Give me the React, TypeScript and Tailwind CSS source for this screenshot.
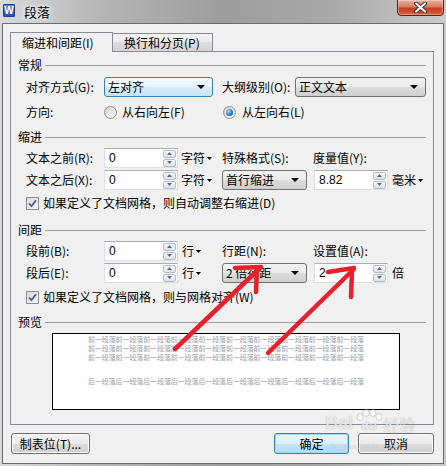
import React from "react";

function Tri({ big }: { big?: boolean }) {
  return big ? (
    <svg width="8" height="4" viewBox="0 0 8 4" className="shrink-0">
      <path d="M0 0h8L4 4z" fill="#000" />
    </svg>
  ) : (
    <svg width="5" height="3" viewBox="0 0 5 3" className="shrink-0">
      <path d="M0 0h5L2.5 3z" fill="#000" />
    </svg>
  );
}

function Spin() {
  return (
    <div className="ml-auto w-[13px] h-[17px] flex flex-col gap-[1px]">
      <div className="flex-1 border border-[#b4bac6] rounded-[2px] bg-[linear-gradient(#f7f8fa,#dde2e9)] flex items-center justify-center">
        <svg width="5" height="3" viewBox="0 0 5 3">
          <path d="M0 3h5L2.5 0z" fill="#4f6a9a" />
        </svg>
      </div>
      <div className="flex-1 border border-[#b4bac6] rounded-[2px] bg-[linear-gradient(#f7f8fa,#dde2e9)] flex items-center justify-center">
        <svg width="5" height="3" viewBox="0 0 5 3">
          <path d="M0 0h5L2.5 3z" fill="#4f6a9a" />
        </svg>
      </div>
    </div>
  );
}

function Input({ value }: { value: string }) {
  return (
    <div className="w-[74px] h-[20px] shrink-0 border border-[#dbdfe6] border-t-[#abadb3] bg-white flex items-center pl-[4px] pr-[1px]">
      <span className="font-['Liberation_Sans',sans-serif] text-[12px]">{value}</span>
      <Spin />
    </div>
  );
}

function Select({ text, w, hot }: { text: string; w: string; hot?: boolean }) {
  return (
    <div
      className={
        "h-[20px] shrink-0 rounded-[3px] border flex items-center pl-[3px] pr-[7px] " +
        w +
        (hot
          ? " border-[#3c7fb1] bg-[linear-gradient(#f4fafe,#e8f4fb_50%,#d6ecf9_50%,#c8e4f5)]"
          : " border-[#707070] bg-[linear-gradient(#f2f2f2,#ebebeb_50%,#dddddd_50%,#cfcfcf)]")
      }
    >
      <span className="flex-1">{text}</span>
      <Tri big />
    </div>
  );
}

function Unit({ text, w }: { text: string; w: string }) {
  return (
    <div className={"shrink-0 flex items-center gap-[2px] " + w}>
      <span>{text}</span>
      <Tri />
    </div>
  );
}

function Check() {
  return (
    <div className="w-[13px] h-[13px] shrink-0 border border-[#8e8f8f] bg-[linear-gradient(135deg,#d6d6d6,#fbfbfb)] flex items-center justify-center">
      <svg width="9" height="9" viewBox="0 0 9 9">
        <path d="M1 4.5 L3.5 7.2 L8 1.2" stroke="#3f56a0" strokeWidth="1.8" fill="none" />
      </svg>
    </div>
  );
}

function Radio({ on }: { on?: boolean }) {
  return (
    <div className="w-[13px] h-[13px] shrink-0 rounded-full border border-[#8e8f8f] bg-[linear-gradient(135deg,#cfcfcf,#fafafa)] flex items-center justify-center">
      {on && (
        <div className="w-[7px] h-[7px] rounded-full bg-[radial-gradient(circle_at_35%_35%,#9bdcff,#1f78c8_60%,#0b4b94)]" />
      )}
    </div>
  );
}

function Group({ title, cls }: { title: string; cls: string }) {
  return (
    <div className={"h-[16px] flex items-center " + cls}>
      <span>{title}</span>
      <div className="flex-1 ml-[3px] border-t border-[#a0a0a0]" />
    </div>
  );
}

function Btn({ text, w, def }: { text: string; w: string; def?: boolean }) {
  return (
    <div
      className={
        "h-[21px] rounded-[3px] border flex items-center justify-center " +
        w +
        (def
          ? " border-[#3c7fb1] bg-[linear-gradient(#eaf6fd,#dcf0fb_50%,#c4e5f8_50%,#b2dbf5)] shadow-[inset_0_0_0_1px_#9fdcfa]"
          : " border-[#707070] bg-[linear-gradient(#f2f2f2,#ebebeb_50%,#dddddd_50%,#cfcfcf)] shadow-[inset_0_0_0_1px_#fcfcfc]")
      }
    >
      {text}
    </div>
  );
}

const PRE = "前一段落前一段落前一段落前一段落前一段落前一段落前一段落前一段落前一段落前一段落";
const POST = "后一段落后一段落后一段落后一段落后一段落后一段落后一段落后一段落后一段落后一段落";

export default function App() {
  return (
    <div className="relative w-[446px] h-[466px] overflow-hidden flex flex-col bg-[linear-gradient(90deg,#dadada,#b6b6b6_22%,#9d9d9d_50%,#a9a9a9_75%,#cbcbcb)] font-['Noto_Sans_CJK_SC','Noto_Sans',sans-serif] text-[12px] leading-none text-black">
      {/* title bar */}
      <div className="h-[23px] shrink-0 flex items-start">
        <div className="ml-[3px] mt-[4px] w-[12px] h-[13px] rounded-[1px] bg-[linear-gradient(#5d8ae0,#2050b8)] border border-[#1b3f8f] flex items-center justify-center font-['Liberation_Sans',sans-serif] font-bold text-[10px] text-white">
          W
        </div>
        <div className="ml-[9px] mt-[5px] text-[13px] [text-shadow:0_0_4px_#fff,0_0_6px_#fff]">段落</div>
        <div className="flex-1" />
        <div className="mr-[2px] -mt-px w-[47px] h-[17px] rounded-b-[4px] border border-[#5a1e14] bg-[linear-gradient(#eab0a2,#d87a62_45%,#c4401f_55%,#d8603c)] shadow-[inset_0_0_0_1px_rgba(255,255,255,0.35)] flex items-center justify-center">
          <svg width="13" height="11" viewBox="0 0 13 11">
            <path d="M2 1.5 L11 9.5 M11 1.5 L2 9.5" stroke="#3a3a3a" strokeWidth="4" strokeLinecap="round" />
            <path d="M2 1.5 L11 9.5 M11 1.5 L2 9.5" stroke="#fff" strokeWidth="2" strokeLinecap="round" />
          </svg>
        </div>
      </div>

      {/* client area */}
      <div className="mx-[2px] h-[441px] shrink-0 border border-[#6b6b6b] bg-[#f0f0f0] flex flex-col px-[7px]">
        {/* tabs */}
        <div className="mt-[8px] h-[19px] flex items-end">
          <div className="relative z-10 w-[103px] h-[20px] -mb-px border-l border-t border-r border-[#898c95] bg-[#f0f0f0] flex items-center pl-[11px] self-start">
            缩进和间距(I)
          </div>
          <div className="w-[100px] h-[18px] border-t border-r border-[#898c95] bg-[linear-gradient(#f3f3f3,#ebebeb_50%,#dddddd_50%,#d3d3d3)] flex items-center pl-[11px]">
            换行和分页(P)
          </div>
        </div>

        {/* panel */}
        <div className="w-[424px] h-[374px] border border-[#898c95] bg-[#f0f0f0] flex flex-col pt-[5px] px-[7px]">
          <Group title="常规" cls="" />
          <div className="mt-[4px] ml-[8px] h-[20px] flex items-center">
            <div className="w-[78px] shrink-0">对齐方式(G):</div>
            <Select text="左对齐" w="w-[109px]" hot />
            <div className="w-[9px] shrink-0" />
            <div className="w-[73px] shrink-0">大纲级别(O):</div>
            <Select text="正文文本" w="w-[131px]" />
          </div>
          <div className="mt-[5px] ml-[8px] h-[20px] flex items-center">
            <div className="w-[78px] shrink-0">方向:</div>
            <div className="w-[119px] shrink-0 flex items-center gap-[5px]">
              <Radio />
              <span>从右向左(F)</span>
            </div>
            <div className="flex items-center gap-[6px]">
              <Radio on />
              <span>从左向右(L)</span>
            </div>
          </div>

          <Group title="缩进" cls="mt-[7px]" />
          <div className="mt-[3px] ml-[8px] h-[20px] flex items-center">
            <div className="w-[78px] shrink-0">文本之前(R):</div>
            <Input value="0" />
            <Unit text="字符" w="w-[44px] pl-[3px]" />
            <div className="w-[91px] shrink-0">特殊格式(S):</div>
            <div>度量值(Y):</div>
          </div>
          <div className="mt-[2px] ml-[8px] h-[20px] flex items-center">
            <div className="w-[78px] shrink-0">文本之后(X):</div>
            <Input value="0" />
            <Unit text="字符" w="w-[44px] pl-[3px]" />
            <Select text="首行缩进" w="w-[85px]" />
            <div className="w-[7px] shrink-0" />
            <Input value="8.82" />
            <Unit text="毫米" w="pl-[4px]" />
          </div>
          <div className="mt-[5px] ml-[8px] h-[16px] flex items-center gap-[4px]">
            <Check />
            <span>如果定义了文档网格，则自动调整右缩进(D)</span>
          </div>

          <Group title="间距" cls="mt-[11px]" />
          <div className="mt-[3px] ml-[8px] h-[20px] flex items-center">
            <div className="w-[78px] shrink-0">段前(B):</div>
            <Input value="0" />
            <Unit text="行" w="w-[44px] pl-[4px]" />
            <div className="w-[91px] shrink-0">行距(N):</div>
            <div>设置值(A):</div>
          </div>
          <div className="mt-[2px] ml-[8px] h-[20px] flex items-center">
            <div className="w-[78px] shrink-0">段后(E):</div>
            <Input value="0" />
            <Unit text="行" w="w-[44px] pl-[4px]" />
            <Select text="2 倍行距" w="w-[85px]" />
            <div className="w-[7px] shrink-0" />
            <Input value="2" />
            <div className="pl-[4px]">倍</div>
          </div>
          <div className="mt-[6px] ml-[8px] h-[16px] flex items-center gap-[4px]">
            <Check />
            <span>如果定义了文档网格，则与网格对齐(W)</span>
          </div>

          <Group title="预览" cls="mt-[9px]" />
          <div className="mt-[3px] ml-[34px] w-[348px] h-[77px] border border-black bg-white flex flex-col items-center pt-[1px] text-[7px] leading-[9px] text-[#9aa0aa] tracking-[-0.1px]">
            <div>{PRE}</div>
            <div>{PRE}</div>
            <div>{PRE}</div>
            <div className="mt-[15px]">{POST}</div>
          </div>
        </div>

        {/* buttons */}
        <div className="mt-[8px] flex items-center">
          <Btn text="制表位(T)..." w="ml-[1px] w-[79px]" />
          <div className="flex-1" />
          <Btn text="确定" w="w-[75px]" def />
          <Btn text="取消" w="ml-[9px] mr-[2px] w-[76px]" />
        </div>
      </div>

      {/* watermark */}
      <div className="absolute left-[325px] top-[409px] flex items-end text-white/75 [text-shadow:0_0_1px_rgba(0,0,0,0.35)] pointer-events-none">
        <span className="font-['Liberation_Sans',sans-serif] font-bold text-[18px] leading-none">Bai</span>
        <span className="relative ml-[3px] w-[26px] h-[23px] flex items-end justify-center">
          <svg className="absolute left-0 top-0" width="26" height="12" viewBox="0 0 26 12">
            <g fill="rgba(255,255,255,0.75)" stroke="rgba(0,0,0,0.25)" strokeWidth="0.6">
              <ellipse cx="4" cy="8" rx="3" ry="3.5" />
              <ellipse cx="10" cy="4" rx="3" ry="3.5" />
              <ellipse cx="17" cy="4" rx="3" ry="3.5" />
              <ellipse cx="23" cy="8" rx="3" ry="3.5" />
            </g>
          </svg>
          <span className="font-['Liberation_Sans',sans-serif] font-bold text-[13px] leading-none">du</span>
        </span>
        <span className="text-[16px] leading-none ml-[1px]">经验</span>
      </div>
      <div className="absolute left-[330px] top-[442px] font-['Liberation_Serif',serif] text-[9px] leading-none text-white/70 [text-shadow:0_0_1px_rgba(0,0,0,0.3)] pointer-events-none">
        jingyan.baidu.com
      </div>

      {/* red arrows */}
      <svg className="absolute left-0 top-0 pointer-events-none" width="446" height="466" viewBox="0 0 446 466">
        <g stroke="#e8202b" strokeWidth="4.5" strokeLinecap="round" fill="none">
          <path d="M175 349 L260 268" />
          <path d="M235 268 L261 267" />
          <path d="M257 268 L256 292" />
          <path d="M268 353 L354 269" />
          <path d="M328 272 L354 268" />
          <path d="M352 270 L351 297" />
        </g>
      </svg>
    </div>
  );
}
